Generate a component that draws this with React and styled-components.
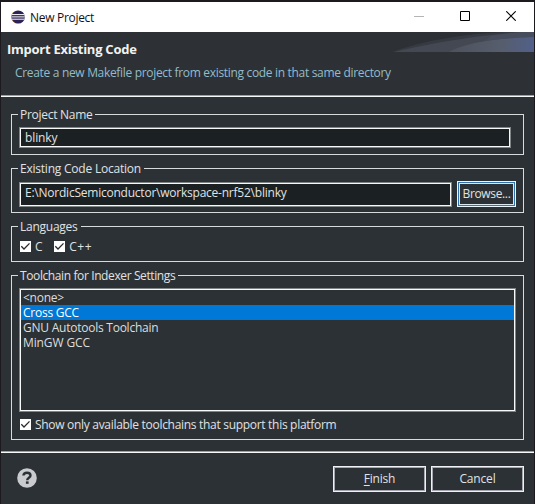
import React from 'react';
import styled, { createGlobalStyle } from 'styled-components';

const GlobalStyle = createGlobalStyle`
  *, *::before, *::after { box-sizing: border-box; }
  body { margin: 0; background: #1c191c; overflow: hidden; }
`;

const Window = styled.div`
  width: 535px;
  height: 504px;
  padding: 2px 1px 0 1px;
  display: flex;
  flex-direction: column;
  background: #1c1a1e;
  color: #e0e2e3;
  font: 12px/15px "Open Sans", "Noto Sans", sans-serif;
  white-space: pre;
`;

const Label = styled.span`
  display: block;
  height: 15px;
  letter-spacing: ${(p) => p.$track ?? -0.25}px;
`;

const TitleBar = styled.header`
  height: 30px;
  flex: none;
  display: flex;
  align-items: center;
  padding-left: 10px;
  background: #fff;
  color: #111;
`;

const Title = styled(Label)`
  flex: 1;
  margin-left: 5px;
`;

const WindowControl = styled.div`
  width: 46px;
  height: 30px;
  display: flex;
  align-items: center;
  justify-content: center;
  padding-bottom: 2px;
`;

const Controls = styled.div`
  display: flex;
`;

const Banner = styled.div`
  height: 65px;
  flex: none;
  display: flex;
  justify-content: space-between;
  background: #2d3135;
  border-bottom: 1px solid #f7f8f8;
  box-shadow: inset 0 -1px 0 #9c9fa1;
`;

const BannerText = styled.div`
  display: flex;
  flex-direction: column;
  padding: 9px 0 0 6px;
`;

const Heading = styled.h1`
  margin: 0;
  font-size: 13px;
  line-height: 16px;
  font-weight: 700;
  letter-spacing: -0.25px;
  color: #f1f1f1;
`;

const Description = styled.p`
  margin: 8px 0 0 8px;
  letter-spacing: -0.32px;
  color: #93bccb;
`;

const Body = styled.main`
  height: 354px;
  flex: none;
  padding: 10px 10px 0;
  background: #2c3135;
`;

const Group = styled.fieldset`
  margin: 0 0 ${(p) => p.$gap}px;
  padding: 0 ${(p) => p.$right ?? 7}px 0 7px;
  height: ${(p) => p.$height}px;
  min-width: 0;
  border: 1px solid #d8dbdc;
`;

const Legend = styled.legend`
  height: 15px;
  margin-left: -1px;
  padding: 0 3px 0 2px;
`;

const Row = styled.div`
  display: flex;
  align-items: center;
  gap: ${(p) => p.$gap ?? 0}px;
  margin-top: ${(p) => p.$top}px;
  padding-left: ${(p) => p.$indent ?? 0}px;
`;

const Field = styled.div`
  flex: 1;
  height: ${(p) => p.$height}px;
  padding: 2px 0 0 5px;
  border: 1px solid #7f8485;
  box-shadow: inset 0 0 0 1px #f7f8f8;
  background: #1b2022;
`;

const Button = styled.button`
  width: 93px;
  height: 26px;
  display: flex;
  align-items: center;
  justify-content: center;
  padding: 0 0 1px;
  border: 1px solid #f0f1f4;
  box-shadow: inset 0 0 0 1px #a6a6b0;
  background: #2c3135;
  color: inherit;
  font: inherit;
`;

const FocusedButton = styled(Button)`
  width: 59px;
  border-color: #eaf6ff;
  box-shadow: inset 0 0 0 1px #2f72ab, inset 0 0 0 2px #d9e6ee;
`;

const CheckLabel = styled.label`
  display: flex;
  align-items: center;
  gap: 4px;
`;

const CheckSquare = styled.span`
  width: 11px;
  height: 11px;
  display: flex;
  background: #fff;
`;

const ListBox = styled.ul`
  margin: 5px 0 0;
  padding: 1px 1px 0;
  height: 124px;
  list-style: none;
  border: 1px solid #7f8485;
  box-shadow: inset 0 0 0 1px #f7f8f8;
`;

const ListItem = styled.li`
  height: 15px;
  padding-left: 2px;
  background: ${(p) => (p.$selected ? '#0078d7' : 'transparent')};
  color: ${(p) => (p.$selected ? '#fff' : '#dcdedf')};
`;

const Footer = styled.footer`
  flex: 1;
  display: flex;
  gap: 5px;
  align-items: flex-start;
  padding: 14px 10px 0 16px;
  border-top: 1px solid #9c9fa4;
  box-shadow: inset 0 1px 0 #f7f8f8;
  background: #2c3135;
`;

const HelpSlot = styled.div`
  flex: 1;
  padding-top: 2px;
  svg { display: block; }
`;

const Mnemonic = styled.span`
  text-decoration: underline;
  text-underline-offset: 2px;
`;

const Logo = () => (
  <svg width="14" height="14" viewBox="0 0 14 14">
    <circle cx="6.3" cy="7" r="6.3" fill="#e9a64b" />
    <circle cx="7.2" cy="7" r="6.6" fill="#2c2253" />
    <path d="M1 4.6h12.3M.7 6.9h13M1 9.2h12.3" stroke="#fff" strokeWidth="1" />
  </svg>
);

const Swoosh = () => (
  <svg width="142" height="20" viewBox="0 0 142 20">
    <defs>
      <linearGradient id="glow">
        <stop offset="0" stopColor="#4d515c" />
        <stop offset="0.6" stopColor="#565d6c" />
        <stop offset="1" stopColor="#526089" />
      </linearGradient>
    </defs>
    <path d="M0 20C30 9 70 2 112 0H142V20Z" fill="#363a42" />
    <path d="M2 20C38 11 80 4 128 0H142V20Z" fill="#444853" />
    <path d="M57 20C72 11 104 6 142 5V20Z" fill="url(#glow)" />
    <path d="M100 4C116 1 130 0 142 0V5C124 5.5 106 7 92 9Z" fill="#4a5263" opacity="0.6" />
  </svg>
);

const Check = ({ children, track }) => (
  <CheckLabel>
    <CheckSquare>
      <svg width="11" height="11" viewBox="0 0 11 11">
        <path d="M1.3 5.3L4 8L9.5 2.4" fill="none" stroke="#25292c" strokeWidth="1.3" />
      </svg>
    </CheckSquare>
    <Label $track={track}>{children}</Label>
  </CheckLabel>
);

const toolchains = [
  { name: '<none>', track: -0.25 },
  { name: 'Cross GCC', track: -0.25, selected: true },
  { name: 'GNU Autotools Toolchain', track: -0.24 },
  { name: 'MinGW GCC', track: -0.12 },
];

export default function App() {
  return (
    <>
      <GlobalStyle />
      <Window>
        <TitleBar>
          <Logo />
          <Title $track={-0.3}>New Project</Title>
          <Controls>
            <WindowControl>
              <svg width="10" height="10"><path d="M0 5.5h10" stroke="#b4b4b4" /></svg>
            </WindowControl>
            <WindowControl>
              <svg width="10" height="10"><path d="M.5.5h9v9h-9z" fill="none" stroke="#000" /></svg>
            </WindowControl>
            <WindowControl>
              <svg width="10" height="10"><path d="M.3.3l9.4 9.4M9.7.3L.3 9.7" stroke="#000" strokeWidth="1.1" /></svg>
            </WindowControl>
          </Controls>
        </TitleBar>
        <Banner>
          <BannerText>
            <Heading>Import Existing Code</Heading>
            <Description>Create a new Makefile project from existing code in that same directory</Description>
          </BannerText>
          <Swoosh />
        </Banner>
        <Body>
          <Group $height={48} $gap={6} $right={12}>
            <Legend><Label $track={-0.28}>Project Name</Label></Legend>
            <Row $top={5}>
              <Field $height={21}><Label $track={-0.1}>blinky</Label></Field>
            </Row>
          </Group>
          <Group $height={52} $gap={6}>
            <Legend><Label $track={-0.22}>Existing Code Location</Label></Legend>
            <Row $top={5} $gap={5}>
              <Field $height={25}>
                <Label $track={-0.23}>{'E:\\NordicSemiconductor\\workspace-nrf52\\blinky'}</Label>
              </Field>
              <FocusedButton><Label $track={-0.35}>Browse...</Label></FocusedButton>
            </Row>
          </Group>
          <Group $height={43} $gap={6}>
            <Legend><Label $track={-0.25}>Languages</Label></Legend>
            <Row $top={5} $gap={12} $indent={1}>
              <Check>C</Check>
              <Check track={0.5}>C++</Check>
            </Row>
          </Group>
          <Group $height={172} $gap={0}>
            <Legend><Label $track={-0.39}>Toolchain for Indexer Settings</Label></Legend>
            <ListBox>
              {toolchains.map((t) => (
                <ListItem key={t.name} $selected={t.selected}>
                  <Label $track={t.track}>{t.name}</Label>
                </ListItem>
              ))}
            </ListBox>
            <Row $top={5} $indent={1}>
              <Check track={-0.3}>Show only available toolchains that support this platform</Check>
            </Row>
          </Group>
        </Body>
        <Footer>
          <HelpSlot>
            <svg width="20" height="20" viewBox="0 0 20 20">
              <circle cx="10" cy="10" r="9.8" fill="#c9cbcf" />
              <path d="M6.4 7.5C6.6 5.5 8 4.7 10 4.7C12 4.7 13.5 5.7 13.5 7.4C13.5 9.8 10.2 9.6 10.2 12.2" fill="none" stroke="#2c3135" strokeWidth="2.4" />
              <rect x="8.9" y="13.4" width="2.7" height="2.4" fill="#2c3135" />
            </svg>
          </HelpSlot>
          <Button><Label $track={-0.2}><Mnemonic>F</Mnemonic>inish</Label></Button>
          <Button><Label $track={-0.15}>Cancel</Label></Button>
        </Footer>
      </Window>
    </>
  );
}
